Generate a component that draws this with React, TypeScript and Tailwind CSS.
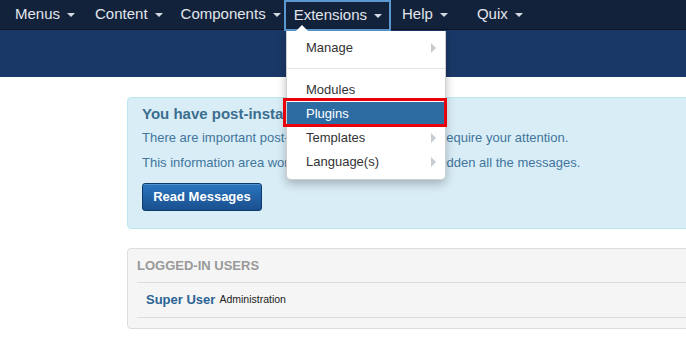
import React from 'react'

const font = { fontFamily: '"Liberation Sans", Arial, sans-serif' }

function Caret() {
  return (
    <span className="inline-block w-0 h-0 border-l-[4px] border-r-[4px] border-t-[4px] border-l-transparent border-r-transparent border-t-[#d5dbe4] ml-[7px] align-middle" />
  )
}

function SubArrow() {
  return <span className="w-0 h-0 border-t-[5px] border-b-[5px] border-l-[5px] border-t-transparent border-b-transparent border-l-[#c6ccd2]" />
}

const navItems = [
  { label: 'Menus', cls: 'pl-[9px] pr-[12px]' },
  { label: 'Content', cls: 'pl-[8px] pr-[10px]' },
  { label: 'Components', cls: 'pl-[8px] pr-[2px]' },
  { label: 'Extensions', cls: 'ml-[1px] pl-[8px] pr-[7px] border-2 border-[#5b98cf] h-[31px]' },
  { label: 'Help', cls: 'pl-[11px] pr-[10px]' },
  { label: 'Quix', cls: 'ml-[9px] pl-[10px] pr-[10px]' },
]

export default function App() {
  return (
    <div className="w-[686px] h-[340px] overflow-hidden bg-white relative" style={font}>
      {/* top navbar */}
      <div className="h-[30px] bg-[#13223b] border-b border-[#0c1628] flex items-stretch pl-[6px]">
        {navItems.map((item) => (
          <div key={item.label} className={`relative flex items-center text-[15px] text-[#e2e6ec] ${item.cls}`}>
            {item.label}
            <Caret />
          </div>
        ))}
      </div>

      {/* blue subheader band */}
      <div className="h-[47px] bg-[#1a3867]" />

      {/* content */}
      <div className="pl-[127px] pt-[20px] w-[760px]">
        <div className="bg-[#d9edf7] border border-[#bce8f1] rounded-[4px] pl-[14px] pt-[7px] pb-[17px] text-[#41759b]">
          <div className="text-[15px] font-bold text-[#3b6e8f] leading-[18px]">You have post-installation messages</div>
          <p className="text-[13px] mt-[7px] leading-[16px]">
            There are important post-installation messages that require your attention.
          </p>
          <p className="text-[13px] mt-[9px] leading-[16px]">
            This information area won't appear when you have hidden all the messages.
          </p>
          <button className="mt-[12px] w-[120px] h-[28px] rounded-[3px] border border-[#0c3a6d] bg-gradient-to-b from-[#2a76c0] to-[#1a4f8e] text-white text-[13px] font-bold shadow-[inset_0_1px_0_rgba(255,255,255,0.2)]">
            Read Messages
          </button>
        </div>

        <div className="mt-[19px] bg-[#f5f5f5] border border-[#dddddd] rounded-[4px] pl-[9px] h-[81px]">
          <div className="h-[34px] flex items-center text-[13px] font-bold text-[#999999] border-b border-[#dcdcdc]">
            LOGGED-IN USERS
          </div>
          <div className="h-[35px] flex items-center pl-[9px] border-b border-[#dcdcdc]">
            <span className="text-[13px] font-bold text-[#2a6496]">Super User</span>
            <span className="text-[10.5px] text-[#222] ml-[4px]">Administration</span>
          </div>
        </div>
      </div>

      {/* dropdown menu */}
      <div className="absolute left-[286px] top-[31px] w-[160px] bg-white rounded-b-[5px] shadow-[0_4px_10px_rgba(0,0,0,0.25)] border border-[#cfcfcf] border-t-0 pt-[5px] pb-[5px] text-[13px] text-[#333]">
        <span className="absolute left-[9px] -top-[6px] w-0 h-0 border-l-[6px] border-r-[6px] border-b-[6px] border-l-transparent border-r-transparent border-b-white" />
        <div className="h-[24px] flex items-center justify-between pl-[19px] pr-[9px]">
          Manage
          <SubArrow />
        </div>
        <div className="mt-[8px] mb-[9px] border-t border-[#e5e5e5]" />
        <div className="h-[24px] flex items-center pl-[19px]">Modules</div>
        <div className="h-[24px] flex items-center pl-[19px] text-white bg-[#2d6ca2]">Plugins</div>
        <div className="h-[24px] flex items-center justify-between pl-[19px] pr-[9px]">
          Templates
          <SubArrow />
        </div>
        <div className="h-[24px] flex items-center justify-between pl-[19px] pr-[9px]">
          Language(s)
          <SubArrow />
        </div>
      </div>

      {/* red highlight around Plugins */}
      <div className="absolute left-[283px] top-[98px] w-[164px] h-[29px] border-[3px] border-[#e8000b] pointer-events-none" />
    </div>
  )
}
